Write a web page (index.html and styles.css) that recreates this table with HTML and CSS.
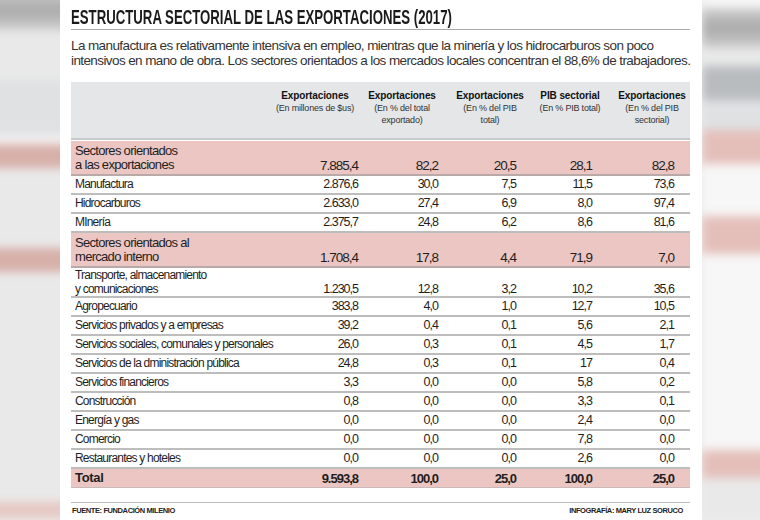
FILE: index.html
```html
<!DOCTYPE html>
<html lang="es">
<head>
<meta charset="utf-8">
<title>Estructura sectorial de las exportaciones (2017)</title>
<link rel="stylesheet" href="styles.css">
</head>
<body>
<div class="page">
  <div class="side side-left">
    <div class="bands">
      <div class="b b-title"></div>
      <div class="b b-lite" style="height:50px"></div>
      <div class="b b-head"></div>
      <div class="b b-white" style="height:8px"></div>
      <div class="b b-pink" style="height:24px"></div>
      <div class="b b-lite" style="height:80px"></div>
      <div class="b b-pink" style="height:24px"></div>
      <div class="b b-lite" style="height:230px"></div>
      <div class="b b-pinklite" style="height:16px"></div>
      <div class="b b-lite" style="height:40px"></div>
    </div>
  </div>

  <main class="panel">
    <h1 class="title"><span class="title-text">ESTRUCTURA SECTORIAL DE LAS EXPORTACIONES (2017)</span></h1>
    <p class="lead">La manufactura es relativamente intensiva en empleo, mientras que la minería y los hidrocarburos son poco<br>intensivos en mano de obra. Los sectores orientados a los mercados locales concentran el 88,6% de trabajadores.</p>

    <div class="table">
      <div class="row head">
        <div class="c lbl"></div>
        <div class="c h1"><b>Exportaciones</b><span>(En millones de $us)</span></div>
        <div class="c h2"><b>Exportaciones</b><span>(En % del total<br>exportado)</span></div>
        <div class="c h3"><b>Exportaciones</b><span>(En % del PIB<br>total)</span></div>
        <div class="c h4"><b>PIB sectorial</b><span>(En % PIB total)</span></div>
        <div class="c h5"><b>Exportaciones</b><span>(En % del PIB<br>sectorial)</span></div>
      </div>

      <div class="row group">
        <div class="c lbl">Sectores orientados<br>a las exportaciones</div>
        <div class="c n1">7.885,4</div><div class="c n2">82,2</div><div class="c n3">20,5</div><div class="c n4">28,1</div><div class="c n5">82,8</div>
      </div>
      <div class="row">
        <div class="c lbl">Manufactura</div>
        <div class="c n1">2.876,6</div><div class="c n2">30,0</div><div class="c n3">7,5</div><div class="c n4">11,5</div><div class="c n5">73,6</div>
      </div>
      <div class="row">
        <div class="c lbl">Hidrocarburos</div>
        <div class="c n1">2.633,0</div><div class="c n2">27,4</div><div class="c n3">6,9</div><div class="c n4">8,0</div><div class="c n5">97,4</div>
      </div>
      <div class="row">
        <div class="c lbl">MInería</div>
        <div class="c n1">2.375,7</div><div class="c n2">24,8</div><div class="c n3">6,2</div><div class="c n4">8,6</div><div class="c n5">81,6</div>
      </div>
      <div class="row group">
        <div class="c lbl">Sectores orientados al<br>mercado interno</div>
        <div class="c n1">1.708,4</div><div class="c n2">17,8</div><div class="c n3">4,4</div><div class="c n4">71,9</div><div class="c n5">7,0</div>
      </div>
      <div class="row double">
        <div class="c lbl">Transporte, almacenamiento<br>y comunicaciones</div>
        <div class="c n1">1.230,5</div><div class="c n2">12,8</div><div class="c n3">3,2</div><div class="c n4">10,2</div><div class="c n5">35,6</div>
      </div>
      <div class="row">
        <div class="c lbl">Agropecuario</div>
        <div class="c n1">383,8</div><div class="c n2">4,0</div><div class="c n3">1,0</div><div class="c n4">12,7</div><div class="c n5">10,5</div>
      </div>
      <div class="row">
        <div class="c lbl">Servicios privados y a empresas</div>
        <div class="c n1">39,2</div><div class="c n2">0,4</div><div class="c n3">0,1</div><div class="c n4">5,6</div><div class="c n5">2,1</div>
      </div>
      <div class="row">
        <div class="c lbl">Servicios sociales, comunales y personales</div>
        <div class="c n1">26,0</div><div class="c n2">0,3</div><div class="c n3">0,1</div><div class="c n4">4,5</div><div class="c n5">1,7</div>
      </div>
      <div class="row">
        <div class="c lbl">Servicios de la dministración pública</div>
        <div class="c n1">24,8</div><div class="c n2">0,3</div><div class="c n3">0,1</div><div class="c n4">17</div><div class="c n5">0,4</div>
      </div>
      <div class="row">
        <div class="c lbl">Servicios financieros</div>
        <div class="c n1">3,3</div><div class="c n2">0,0</div><div class="c n3">0,0</div><div class="c n4">5,8</div><div class="c n5">0,2</div>
      </div>
      <div class="row">
        <div class="c lbl">Construcción</div>
        <div class="c n1">0,8</div><div class="c n2">0,0</div><div class="c n3">0,0</div><div class="c n4">3,3</div><div class="c n5">0,1</div>
      </div>
      <div class="row">
        <div class="c lbl">Energía y gas</div>
        <div class="c n1">0,0</div><div class="c n2">0,0</div><div class="c n3">0,0</div><div class="c n4">2,4</div><div class="c n5">0,0</div>
      </div>
      <div class="row">
        <div class="c lbl">Comercio</div>
        <div class="c n1">0,0</div><div class="c n2">0,0</div><div class="c n3">0,0</div><div class="c n4">7,8</div><div class="c n5">0,0</div>
      </div>
      <div class="row">
        <div class="c lbl">Restaurantes y hoteles</div>
        <div class="c n1">0,0</div><div class="c n2">0,0</div><div class="c n3">0,0</div><div class="c n4">2,6</div><div class="c n5">0,0</div>
      </div>
      <div class="row total">
        <div class="c lbl">Total</div>
        <div class="c n1">9.593,8</div><div class="c n2">100,0</div><div class="c n3">25,0</div><div class="c n4">100,0</div><div class="c n5">25,0</div>
      </div>
    </div>

    <footer class="credits">
      <span>FUENTE: FUNDACIÓN MILENIO</span>
      <span>INFOGRAFÍA: MARY LUZ SORUCO</span>
    </footer>
  </main>

  <div class="side side-right">
    <div class="bands">
      <div class="b b-white" style="height:18px"></div>
      <div class="b b-title" style="height:40px"></div>
      <div class="b b-lite" style="height:18px"></div>
      <div class="b b-headdark" style="height:34px"></div>
      <div class="b b-head" style="height:30px"></div>
      <div class="b b-pink" style="height:34px"></div>
      <div class="b b-white" style="height:52px"></div>
      <div class="b b-pink" style="height:38px"></div>
      <div class="b b-white" style="height:196px"></div>
      <div class="b b-pink" style="height:28px"></div>
      <div class="b b-lite" style="height:40px"></div>
    </div>
  </div>
</div>
</body>
</html>
```

FILE: styles.css
```css
html, body {
  margin: 0;
  padding: 0;
  background: #ffffff;
}

body {
  width: 760px;
  height: 520px;
  overflow: hidden;
  font-family: "Liberation Sans", Arial, sans-serif;
  color: #222;
}

.page {
  display: grid;
  grid-template-columns: 60px 642px 58px;
  height: 520px;
}

/* blurred background strips */
.side {
  overflow: hidden;
  background: #ececec;
}

.bands {
  display: flex;
  flex-direction: column;
  height: 540px;
  margin: -10px -14px 0;
  filter: blur(5px);
}

.b { flex: none; }
.b-title { height: 40px; background: linear-gradient(#cfcfcf, #a9a9a9 50%, #cfcfcf); }
.b-lite { background: #e9e9e9; }
.b-white { background: #f7f7f7; }
.b-head { height: 56px; background: #dfe1e3; }
.b-headdark { background: #b9bcbf; }
.b-pink { background: #d7b0aa; }
.b-pinklite { background: #e6c8c3; }

.side-right .bands { margin-left: 0; }
.side-right .b-pink { background: #e4bfba; }

/* main panel */
.panel {
  background: #ffffff;
  padding: 0 12px 0 11px;
}

.title {
  margin: 0;
  padding: 6px 0 1px;
  border-bottom: 1px solid #a8a8a8;
  font-family: "Liberation Sans", Arial, sans-serif;
  font-weight: 700;
  font-size: 20px;
  line-height: 22px;
  color: #1a1a1a;
  white-space: nowrap;
}

.title-text {
  display: inline-block;
  transform: scaleX(0.66);
  transform-origin: left center;
}

.lead {
  margin: 8px 0 0;
  font-family: "Liberation Sans", Arial, sans-serif;
  font-size: 13.5px;
  line-height: 15px;
  letter-spacing: -0.6px;
  color: #333;
  white-space: nowrap;
}

/* table */
.table {
  margin-top: 14px;
}

.row {
  display: grid;
  grid-template-columns: 197px 94px 80px 78px 78px 92px;
  height: 19px;
  box-sizing: border-box;
  border-bottom: 2px solid #bdbdbd;
  font-size: 12.5px;
  line-height: 17px;
  color: #1e1e1e;
}

.c {
  white-space: nowrap;
}

.lbl {
  padding-left: 4px;
  font-size: 12px;
  letter-spacing: -0.8px;
}

.n1, .n2, .n3, .n4, .n5 {
  text-align: right;
  align-self: end;
  letter-spacing: -1px;
}
.n1 { padding-right: 4px; }
.n2 { padding-right: 4px; }
.n3 { padding-right: 4px; }
.n4 { padding-right: 6px; }
.n5 { padding-right: 16px; }

.row.head {
  height: 58px;
  background: #e4e6e8;
  border-bottom: 2px solid #c7cbce;
  margin-bottom: 1px;
  padding-top: 7px;
  font-size: 9px;
  line-height: 12px;
  color: #333;
}

.head .c {
  display: flex;
  flex-direction: column;
  align-items: center;
  text-align: center;
  letter-spacing: -0.2px;
}

.head b {
  font-family: "Liberation Sans", Arial, sans-serif;
  font-weight: 700;
  font-size: 10px;
  line-height: 13px;
  letter-spacing: -0.1px;
  color: #111;
}

.head .h3 { padding-left: 18px; }
.head .h4 { padding-left: 22px; }
.head .h5 { padding-left: 16px; }

.row.group {
  height: 35px;
  background: #ebc6c3;
  border-bottom-color: #b9a9a8;
  padding-top: 3px;
  line-height: 14px;
}

.row.group .lbl {
  font-size: 13px;
  letter-spacing: -0.7px;
}

.row.group .n1, .row.group .n2, .row.group .n3, .row.group .n4, .row.group .n5 {
  font-size: 13.5px;
  padding-bottom: 1px;
}

.row.double {
  height: 30px;
  line-height: 14px;
}

.row.total {
  height: 19px;
  background: #ebc6c3;
  border-bottom: 1px solid #c9b9b8;
  font-weight: 700;
  font-size: 13px;
}

.row.total .lbl {
  font-size: 13px;
  letter-spacing: -0.3px;
}

.credits {
  display: flex;
  justify-content: space-between;
  margin-top: 14px;
  padding: 3px 7px 0 1px;
  border-top: 1px solid #bdbdbd;
  font-family: "Liberation Sans", Arial, sans-serif;
  font-weight: 700;
  font-size: 7.5px;
  line-height: 10px;
  color: #222;
  letter-spacing: -0.4px;
}
```
